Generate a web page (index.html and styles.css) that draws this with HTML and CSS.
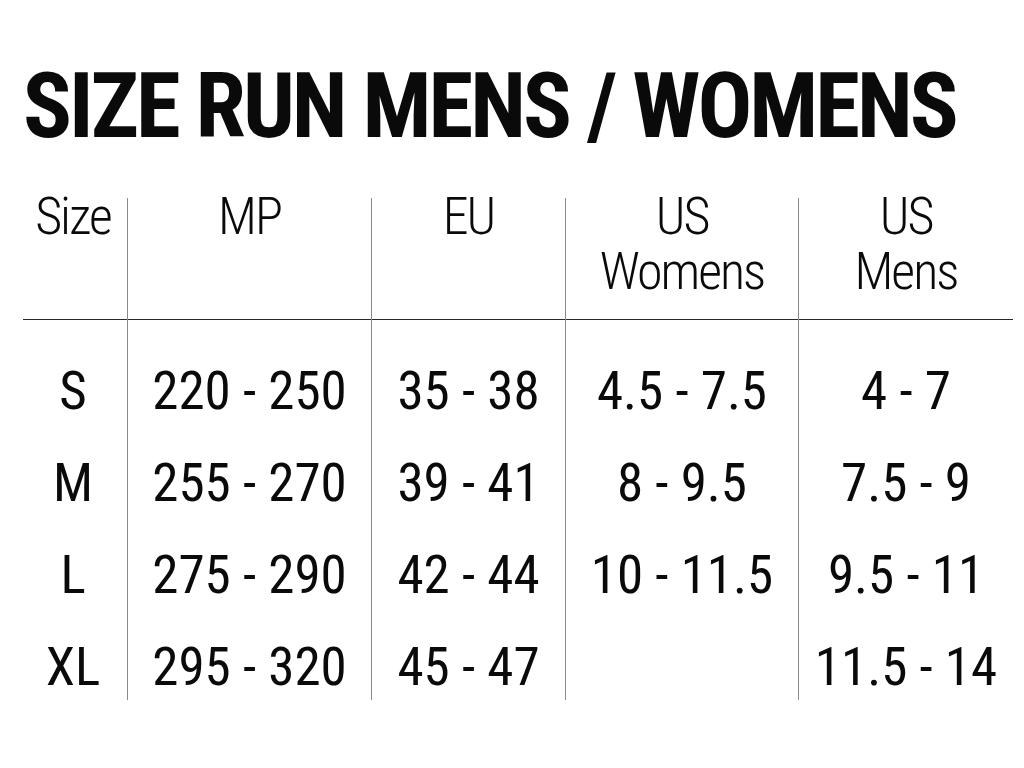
FILE: index.html
```html
<!DOCTYPE html>
<html lang="en">
<head>
<meta charset="utf-8">
<title>Size Run Mens / Womens</title>
<link rel="stylesheet" href="styles.css">
</head>
<body>
<main class="page">
  <h1 class="title">SIZE RUN MENS / WOMENS</h1>
  <div class="table">
    <div class="col col-size">
      <div class="head"><div class="head-text">Size</div></div>
      <div class="cells">
        <div class="cell">S</div>
        <div class="cell">M</div>
        <div class="cell">L</div>
        <div class="cell">XL</div>
      </div>
    </div>
    <div class="col col-mp">
      <div class="head"><div class="head-text">MP</div></div>
      <div class="cells">
        <div class="cell">220 - 250</div>
        <div class="cell">255 - 270</div>
        <div class="cell">275 - 290</div>
        <div class="cell">295 - 320</div>
      </div>
    </div>
    <div class="col col-eu">
      <div class="head"><div class="head-text">EU</div></div>
      <div class="cells">
        <div class="cell">35 - 38</div>
        <div class="cell">39 - 41</div>
        <div class="cell">42 - 44</div>
        <div class="cell">45 - 47</div>
      </div>
    </div>
    <div class="col col-usw">
      <div class="head"><div class="head-text">US<br>Womens</div></div>
      <div class="cells">
        <div class="cell">4.5 - 7.5</div>
        <div class="cell">8 - 9.5</div>
        <div class="cell">10 - 11.5</div>
        <div class="cell"></div>
      </div>
    </div>
    <div class="col col-usm">
      <div class="head"><div class="head-text">US<br>Mens</div></div>
      <div class="cells">
        <div class="cell">4 - 7</div>
        <div class="cell">7.5 - 9</div>
        <div class="cell">9.5 - 11</div>
        <div class="cell">11.5 - 14</div>
      </div>
    </div>
  </div>
</main>
</body>
</html>
```

FILE: styles.css
```css
html, body {
  margin: 0;
  padding: 0;
  background: #ffffff;
}

body {
  font-family: "Roboto Condensed", Roboto, "DejaVu Sans Condensed", sans-serif;
  font-stretch: 75%;
  color: #0a0a0a;
}

.page {
  width: 1024px;
  height: 768px;
  padding-top: 56px;
  box-sizing: border-box;
  overflow: hidden;
}

.title {
  margin: 0 0 42px 0;
  padding-left: 23px;
  font-size: 91px;
  line-height: 100px;
  font-weight: 700;
  letter-spacing: -3px;
  white-space: nowrap;
}

.table {
  display: flex;
  margin-left: 23px;
  width: 990px;
}

.col {
  display: flex;
  flex-direction: column;
  border-left: 1px solid #8a8a8a;
  text-align: center;
  white-space: nowrap;
}

.col-size { width: 104px; border-left: none; }
.col-mp { width: 243px; }
.col-eu { width: 193px; }
.col-usw { width: 232px; }
.col-usm { width: 214px; }

.head {
  height: 122px;
  border-bottom: 1px solid #2a2a2a;
  box-sizing: border-box;
  font-size: 52px;
  font-weight: 350;
  letter-spacing: -2px;
}

.col-size .head-text { padding-right: 4px; }

.head-text {
  margin-top: -9px;
  line-height: 55px;
}

.cells {
  display: flex;
  flex-direction: column;
  gap: 26px;
  padding-top: 38px;
}

.cell {
  height: 66px;
  line-height: 66px;
  font-size: 53px;
  letter-spacing: 0;
}

.col-size .cell { padding-right: 4px; }
```
